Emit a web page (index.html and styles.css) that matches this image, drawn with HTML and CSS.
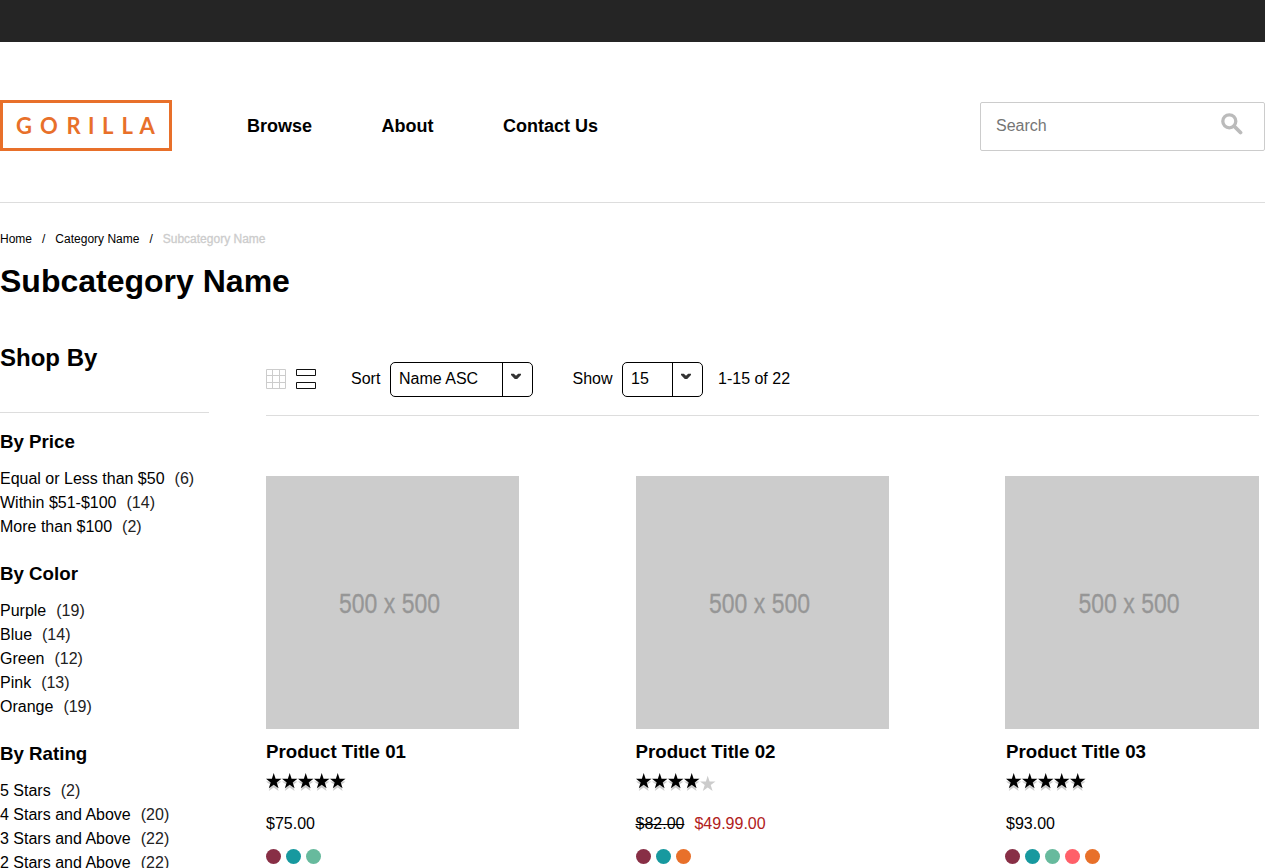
FILE: index.html
```html
<!DOCTYPE html>
<html lang="en">
<head>
<meta charset="utf-8">
<title>Subcategory Name</title>
<link rel="stylesheet" href="styles.css">
</head>
<body>
<svg class="defs" width="0" height="0">
  <defs>
    <path id="star" d="M7.700 0l1.900 5.800h5.900l-4.800 3.600 1.900 5.900L7.700 11.700l-4.900 3.600 1.900-5.900L0 5.800h5.900z"/>
    <g id="row5"><use href="#star"/><use href="#star" x="16"/><use href="#star" x="32"/><use href="#star" x="48"/><use href="#star" x="64"/></g>
    <g id="row4"><use href="#star"/><use href="#star" x="16"/><use href="#star" x="32"/><use href="#star" x="48"/></g>
  </defs>
</svg>
<div class="topbar"></div>
<header class="header">
  <a class="logo">
    <svg width="166" height="45" viewBox="3 103 166 45"><text class="logo-text" y="134" x="16 40 66.500 88 102 121.500 139.500">GORILLA</text></svg>
  </a>
  <nav class="nav"><a>Browse</a><a>About</a><a>Contact Us</a></nav>
  <div class="search">
    <span>Search</span>
    <svg width="22" height="22" viewBox="0 0 22 22"><circle cx="8.300" cy="8.300" r="6.500" fill="none" stroke="#bbb" stroke-width="3.300"/><path d="M13 13l6.500 6.500" stroke="#bbb" stroke-width="3.800" stroke-linecap="round"/></svg>
  </div>
</header>
<div class="crumbs"><a>Home</a><i>/</i><a>Category Name</a><i>/</i><b>Subcategory Name</b></div>
<h1 class="title">Subcategory Name</h1>
<div class="columns">
  <aside class="filters">
    <h2>Shop By</h2>
    <section><h3>By Price</h3><ul>
      <li>Equal or Less than $50<span>(6)</span></li><li>Within $51-$100<span>(14)</span></li><li>More than $100<span>(2)</span></li></ul></section>
    <section><h3>By Color</h3><ul>
      <li>Purple<span>(19)</span></li><li>Blue<span>(14)</span></li><li>Green<span>(12)</span></li><li>Pink<span>(13)</span></li><li>Orange<span>(19)</span></li></ul></section>
    <section><h3>By Rating</h3><ul>
      <li>5 Stars<span>(2)</span></li><li>4 Stars and Above<span>(20)</span></li><li>3 Stars and Above<span>(22)</span></li><li>2 Stars and Above<span>(22)</span></li></ul></section>
  </aside>
  <main class="main">
    <div class="toolbar">
      <svg class="grid-icon" width="20" height="20" viewBox="0 0 20 20" fill="none" stroke="#ccc"><path d="M.5.5h19v19H.5zM6.500.5v19M13.500.5v19M.5 6.500h19M.5 13.500h19"/></svg>
      <svg class="list-icon" width="20" height="20" viewBox="0 0 20 20" fill="none" stroke="#111"><path d="M.5.5h19v6H.5zM.5 13.500h19v6H.5z"/></svg>
      <label class="sort-label">Sort</label>
      <div class="select sort"><span>Name ASC</span><i><svg width="12" height="8" viewBox="0 0 12 8"><path d="M1 .8h2.800L6 2.800 8.200.8H11v1.300L7.200 6H4.800L1 2.100z" fill="#333"/></svg></i></div>
      <label class="show-label">Show</label>
      <div class="select show"><span>15</span><i><svg width="12" height="8" viewBox="0 0 12 8"><path d="M1 .8h2.800L6 2.800 8.200.8H11v1.300L7.200 6H4.800L1 2.100z" fill="#333"/></svg></i></div>
      <span class="range">1-15 of 22</span>
    </div>
    <div class="products">
      <article>
        <svg class="photo" viewBox="0 0 253 253"><text x="73" y="137" textLength="101" lengthAdjust="spacingAndGlyphs">500 x 500</text></svg>
        <h3>Product Title 01</h3>
        <svg class="stars" width="80" height="18" viewBox="0 0 80 18"><use href="#row5" y="2.700" fill="#ccc"/><use href="#row5"/></svg>
        <p class="price">$75.00</p>
        <div class="swatches"><i class="purple"></i><i class="blue"></i><i class="green"></i></div>
      </article>
      <article>
        <svg class="photo" viewBox="0 0 253 253"><text x="73" y="137" textLength="101" lengthAdjust="spacingAndGlyphs">500 x 500</text></svg>
        <h3>Product Title 02</h3>
        <svg class="stars" width="80" height="18" viewBox="0 0 80 18"><use href="#row5" y="2.700" fill="#ccc"/><use href="#row4"/></svg>
        <p class="price"><s>$82.00</s><em>$49.99.00</em></p>
        <div class="swatches"><i class="purple"></i><i class="blue"></i><i class="orange"></i></div>
      </article>
      <article class="last">
        <svg class="photo" viewBox="0 0 253 253"><text x="73" y="137" textLength="101" lengthAdjust="spacingAndGlyphs">500 x 500</text></svg>
        <h3>Product Title 03</h3>
        <svg class="stars" width="80" height="18" viewBox="0 0 80 18"><use href="#row5" y="2.700" fill="#ccc"/><use href="#row5"/></svg>
        <p class="price">$93.00</p>
        <div class="swatches"><i class="purple"></i><i class="blue"></i><i class="green"></i><i class="pink"></i><i class="orange"></i></div>
      </article>
    </div>
  </main>
</div>
</body>
</html>
```
FILE: styles.css
```css
* { box-sizing: border-box; }
html { overflow: hidden; height: 868px; }
body { margin: 0; height: 868px; overflow: hidden; font: 16px/24px "Liberation Sans", Arial, sans-serif; color: #000; background: #fff; }
h1, h2, h3, p, ul { margin: 0; padding: 0; }
ul { list-style: none; }
i, em { font-style: normal; }
.defs { position: absolute; }
.topbar { height: 42px; background: #252525; }
.header { height: 161px; border-bottom: 1px solid #ddd; display: flex; align-items: flex-start; }
.logo { display: block; width: 172px; height: 51px; margin-top: 58px; border: 3px solid #e8702a; }
.logo svg { display: block; }
.logo-text { font: bold 22px Lato, sans-serif; fill: #e8702a; }
.nav { display: flex; gap: 69.500px; margin: 72px 0 0 75px; font-size: 18px; font-weight: bold; }
.search { display: flex; justify-content: space-between; width: 285px; height: 49px; margin: 60px 0 0 auto; padding: 11px 21px 0 15px; border: 1px solid #ccc; border-radius: 2px; color: #757575; }
.search svg { margin-top: -1px; }
.crumbs { display: flex; height: 24px; margin-top: 24px; font-size: 12px; }
.crumbs i { margin: 0 10px; }
.crumbs b { color: #ccc; font-weight: normal; -webkit-text-stroke: .3px #ccc; }
.title { margin-top: 10px; font-size: 32px; line-height: 40px; }
.columns { display: flex; }
.filters { width: 209px; flex: none; margin-right: 57px; }
.filters h2 { height: 72px; margin-top: 40px; margin-bottom: 5px; font-size: 24px; line-height: 34px; border-bottom: 1px solid #ddd; }
.filters section { padding-top: 12px; margin-bottom: 11px; }
.filters h3, .products h3 { font-size: 18.720px; line-height: 24px; }
.filters ul { padding-top: 13px; }
.filters li { white-space: nowrap; }
.filters li span { margin-left: 10px; color: #222; }
.main { width: 993px; }
.toolbar { display: flex; height: 55px; margin-top: 60px; border-bottom: 1px solid #ddd; line-height: 36px; }
.grid-icon, .list-icon { margin-top: 8px; }
.list-icon { margin-left: 10px; }
.sort-label { margin-left: 35px; width: 39px; }
.select { display: flex; height: 35px; margin-top: 1px; border: 1px solid #000; border-radius: 5px; line-height: 32px; }
.select span { flex: 1; padding-left: 8px; }
.select i { width: 30px; border-left: 1px solid #000; }
.select svg { display: block; margin: 10px 0 0 7px; }
.sort { width: 143px; }
.show-label { margin-left: 39.500px; width: 49.500px; }
.show { width: 81px; }
.range { margin-left: 15px; }
.products { display: grid; grid-template-columns: 253px 253px 254px; justify-content: space-between; padding-top: 60px; }
.photo { display: block; width: 100%; height: 253px; background: #ccc; }
.photo text { font: 28px "Liberation Sans", sans-serif; fill: #969696; stroke: #969696; stroke-width: .3px; }
.products h3 { margin-top: 11px; }
.stars { display: block; margin-top: 9px; }
.price { margin-top: 21px; }
.price em { margin-left: 10px; color: #b12020; }
.swatches { display: flex; gap: 5px; margin-top: 13px; }
.last h3, .last .stars, .last .price { margin-left: 1px; }
.swatches i { width: 15px; height: 15px; border-radius: 50%; }
.purple { background: #882f46; }
.blue { background: #17999f; }
.green { background: #67ba9d; }
.pink { background: #ff6069; }
.orange { background: #e8702a; }
```
